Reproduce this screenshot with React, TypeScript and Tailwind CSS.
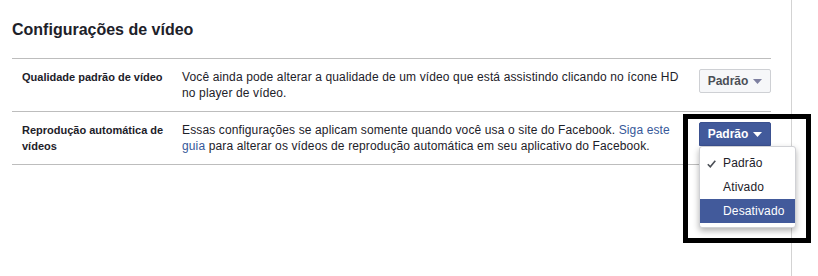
import React from "react";

function Caret({ color }: { color: string }) {
  return (
    <svg width="9" height="5" viewBox="0 0 9 5" className="ml-[5px]">
      <path d="M0 0 L9 0 L4.5 5 Z" fill={color} />
    </svg>
  );
}

export default function App() {
  return (
    <div
      className="relative w-[818px] h-[276px] bg-white overflow-hidden text-[#1d2129]"
      style={{ fontFamily: '"Liberation Sans", Arial, Helvetica, sans-serif' }}
    >
      <div className="w-[792px] h-full border-r border-[#d3d3d3] pl-[12px] pr-[20px] pt-[20px]">
        <h1 className="text-[16px] leading-[20px] font-bold text-[#1d2129]">Configurações de vídeo</h1>
        <div className="mt-[18px] border-t border-[#bdbdbd]">
          <div className="flex border-b border-[#bdbdbd] pl-[10px] pt-[10px] pb-[10px]">
            <div className="w-[160px] shrink-0 pr-[8px] text-[11px] leading-[16px] font-bold">
              Qualidade padrão de vídeo
            </div>
            <div className="w-[500px] shrink-0 text-[12px] leading-[16px] tracking-[0.13px]">
              Você ainda pode alterar a qualidade de um vídeo que está assistindo clicando no ícone HD no player de vídeo.
            </div>
            <div className="ml-auto">
              <div className="flex items-center justify-center w-[72px] h-[24px] bg-[#f6f7f9] border border-[#ced0d4] rounded-[2px] text-[12px] font-bold text-[#4b4f56]">
                Padrão
                <Caret color="#7d7fa0" />
              </div>
            </div>
          </div>
          <div className="flex border-b border-[#bdbdbd] pl-[10px] pt-[10px] pb-[10px]">
            <div className="w-[160px] shrink-0 pr-[8px] text-[11px] leading-[16px] font-bold">
              Reprodução automática de vídeos
            </div>
            <div className="w-[500px] shrink-0 text-[12px] leading-[16px] tracking-[0.13px]">
              Essas configurações se aplicam somente quando você usa o site do Facebook.{" "}
              <span className="text-[#365899]">Siga este guia</span> para alterar os vídeos de reprodução automática em seu aplicativo do Facebook.
            </div>
            <div className="ml-auto">
              <div className="flex items-center justify-center w-[72px] h-[24px] bg-[#425a9b] border border-[#3b5190] rounded-t-[2px] text-[12px] font-bold text-white">
                Padrão
                <Caret color="#ffffff" />
              </div>
            </div>
          </div>
        </div>
      </div>

      {/* highlight frame */}
      <div className="absolute left-[683px] top-[114px] w-[128px] h-[129px] border-[5px] border-black" />

      {/* dropdown menu */}
      <div className="absolute left-[699px] top-[146px] w-[97px] bg-white border border-[#d0d1d5] rounded-[3px] shadow-[0_3px_6px_rgba(0,0,0,0.3)] py-[4px] text-[12px] tracking-[0.15px] text-[#1d2129]">
        <div className="relative h-[24px] flex items-center pl-[23px]">
          <svg width="9" height="8" viewBox="0 0 9 8" className="absolute left-[7px] top-[9px]">
            <path d="M0.8 4.3 L3.3 6.8 L8.3 0.8" fill="none" stroke="#4b4f56" strokeWidth="1.6" />
          </svg>
          Padrão
        </div>
        <div className="h-[24px] flex items-center pl-[23px]">Ativado</div>
        <div className="h-[24px] flex items-center pl-[23px] bg-[#425a9b] text-white">Desativado</div>
      </div>
    </div>
  );
}
